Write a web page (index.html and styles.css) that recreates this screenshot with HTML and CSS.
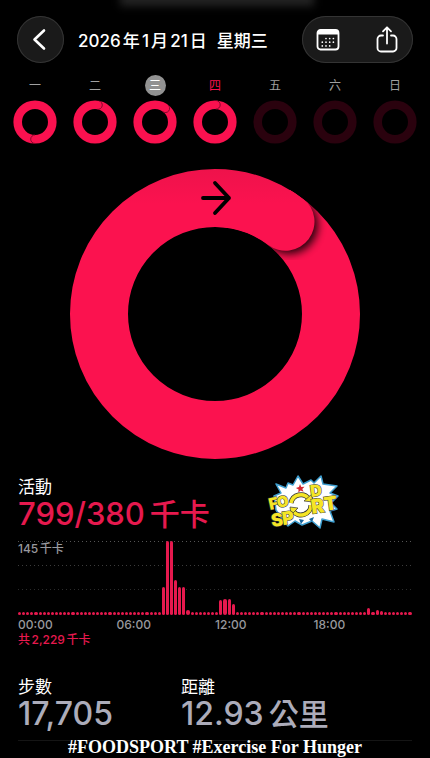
FILE: index.html
```
<!DOCTYPE html>
<html lang="zh-Hant">
  <head>
    <meta charset="UTF-8" />
    <meta name="viewport" content="width=device-width, initial-scale=1.0" />
    <title>活動</title>
    <link rel="stylesheet" href="styles.css">
  </head>
  <body>
    <header class="top-bar">
      <button class="back" aria-label="返回">
        <svg width="47" height="47" viewBox="0 0 47 47">
          <path d="M27 14.500 17.500 23.500 27 32.500" fill="none" stroke="#fff" stroke-width="2.600" stroke-linecap="round" stroke-linejoin="round" />
        </svg>
      </button>
      <h1><span>2026年1月21日</span> <span>星期三</span></h1>
      <div class="actions">
        <button aria-label="行事曆">
          <svg width="24" height="24" viewBox="0 0 24 24">
            <rect x="1.500" y="2" width="21" height="19.500" rx="3" fill="none" stroke="#fff" stroke-width="1.800" />
            <path d="M1.500 6.500V5a3 3 0 0 1 3-3h15a3 3 0 0 1 3 3v1.500z" fill="#fff" />
            <g stroke="#fff" stroke-width="1.700" stroke-linecap="round" stroke-dasharray="0 3.700">
              <path d="M10 10.500h8" />
              <path d="M6.300 14.200h12" />
              <path d="M6.300 17.900h8" />
            </g>
          </svg>
        </button>
        <button aria-label="分享">
          <svg width="24" height="30" viewBox="0 0 24 30">
            <g fill="none" stroke="#fff" stroke-width="1.800" stroke-linecap="round" stroke-linejoin="round">
              <path d="M8 10.500H6a3.500 3.500 0 0 0-3.500 3.500v9A3.500 3.500 0 0 0 6 26.500h12a3.500 3.500 0 0 0 3.500-3.500v-9a3.500 3.500 0 0 0-3.500-3.500h-2" />
              <path d="M12 18.500V2.500M8 6.300l4-4 4 4" />
            </g>
          </svg>
        </button>
      </div>
    </header>

    <!-- one small ring per day, the seam shows where the lap ends -->
    <svg class="defs" width="0" height="0">
      <symbol id="ring" viewBox="0 0 44 44">
        <circle cx="22" cy="22" r="17.300" fill="none" stroke="currentColor" stroke-width="8.600" />
      </symbol>
      <symbol id="seam" viewBox="0 0 44 44">
        <path d="M22 .5a4.300 4.300 0 0 1 0 8.600" fill="none" stroke="#7d0828" stroke-width=".9" />
      </symbol>
    </svg>
    <ol class="week">
      <li><span>一</span><svg width="44" height="44"><use href="#ring" /><use href="#seam" transform="rotate(180 22 22)" /></svg></li>
      <li><span>二</span><svg width="44" height="44"><use href="#ring" /><use href="#seam" transform="rotate(10 22 22)" /></svg></li>
      <li class="selected"><span>三</span><svg width="44" height="44"><use href="#ring" /><use href="#seam" transform="rotate(37 22 22)" /></svg></li>
      <li class="today"><span>四</span><svg width="44" height="44"><use href="#ring" /><use href="#seam" transform="rotate(3 22 22)" /></svg></li>
      <li class="empty"><span>五</span><svg width="44" height="44"><use href="#ring" /></svg></li>
      <li class="empty"><span>六</span><svg width="44" height="44"><use href="#ring" /></svg></li>
      <li class="empty"><span>日</span><svg width="44" height="44"><use href="#ring" /></svg></li>
    </ol>

    <main>
      <svg class="big-ring" viewBox="0 0 290 290" role="img" aria-label="活動圓圈">
        <defs>
          <linearGradient id="shade" gradientUnits="userSpaceOnUse" x1="0" y1="0" x2="0" y2="290">
            <stop offset="0" stop-color="#ee124b" />
            <stop offset=".12" stop-color="#fb124f" />
          </linearGradient>
          <filter id="soft" x="-50%" y="-50%" width="200%" height="200%">
            <feGaussianBlur stdDeviation="4" />
          </filter>
          <mask id="band">
            <circle cx="145" cy="145" r="116" fill="none" stroke="#fff" stroke-width="58" />
          </mask>
        </defs>
        <circle cx="145" cy="145" r="116" fill="none" stroke="url(#shade)" stroke-width="58" />
        <g mask="url(#band)">
          <circle cx="219" cy="56" r="29" fill="#000" opacity=".85" filter="url(#soft)" />
          <path d="M145 29A116 116 0 0 1 215.500 52.700" fill="none" stroke="url(#shade)" stroke-width="58" stroke-linecap="round" />
        </g>
        <path d="M133 29h26M145 14l14 15-14 15" fill="none" stroke="#000" stroke-width="3.800" stroke-linecap="round" stroke-linejoin="round" />
      </svg>

      <section class="move">
        <div>
          <h2>活動</h2>
          <p class="value">799/380<span>千卡</span></p>
        </div>
        <svg class="logo" width="72" height="54" viewBox="0 0 72 54" role="img" aria-label="FOOD SPORT">
          <path d="M8 8 18 12 20 7 25 9 30 0 35 8 43 4 46 7 53 0 55 8 69 10 62 17 70 20 63 27 69 33 62 35 66 46 54 43 52 52 44 45 34 49 27 45 20 50 12 40 8 34 6 20 13 17z" fill="#fff" stroke="#3f9fd0" stroke-width="1.500" stroke-linejoin="round" />
          <path d="m32 8 1.300 3 3.200-.3-2.200 2.300 1.300 2.800-2.900-1.300-2.400 2 .3-3.100-2.700-1.500 3.100-.8z" fill="#d32731" />
          <path d="m31 43 5 1-3 4zM41 43l5-2-2 5z" fill="#17639b" />
          <g fill="none" stroke="#333" stroke-width="5">
            <path d="M23 27A10 10 0 0 1 41 23M43 29A10 10 0 0 1 25 35" />
          </g>
          <g fill="none" stroke="#f5e526" stroke-width="3.600">
            <path d="M23 27A10 10 0 0 1 41 23M43 29A10 10 0 0 1 25 35" />
          </g>
          <path d="m36 25 9 1-1-8zM30 32l-8-1 1 8z" fill="#f5e526" stroke="#333" stroke-width=".7" />
          <g class="logo-text">
            <text x="2" y="34" font-size="16" transform="rotate(-12 2 34)">F</text>
            <text x="10" y="32" font-size="15" transform="rotate(-12 10 32)">O</text>
            <text x="43" y="21" font-size="16" transform="rotate(-8 43 21)">D</text>
            <text x="4" y="51" font-size="18" transform="rotate(-8 4 51)">S</text>
            <text x="15" y="49" font-size="18" transform="rotate(-8 15 49)">P</text>
            <text x="44" y="38" font-size="20" transform="rotate(-8 44 38)">R</text>
            <text x="57" y="35" font-size="19" transform="rotate(-8 57 35)">T</text>
          </g>
        </svg>
      </section>

      <section class="chart">
        <div class="plot">
          <span class="peak">145千卡</span>
          <div class="bars" id="bars"></div>
        </div>
        <div class="hours">
          <span>00:00</span>
          <span>06:00</span>
          <span>12:00</span>
          <span>18:00</span>
        </div>
        <p class="total">共2,229千卡</p>
      </section>

      <section class="stats">
        <div>
          <h2>步數</h2>
          <p class="value">17,705</p>
        </div>
        <div>
          <h2>距離</h2>
          <p class="value">12.93<span>公里</span></p>
        </div>
      </section>
    </main>

    <footer>#FOODSPORT #Exercise For Hunger</footer>

    <script>
      // one bar for each quarter of an hour, quiet quarters stay at 3px
      const active = {
        35: 28, 36: 74, 37: 74, 38: 35, 39: 28, 40: 28, 41: 5,
        49: 15, 50: 16, 51: 16, 52: 11,
        85: 7, 87: 5, 88: 4
      };
      const bars = document.getElementById("bars");

      for (let i = 0; i < 96; i++) {
        const bar = document.createElement("i");
        bar.style.height = (active[i] || 3) + "px";
        bars.appendChild(bar);
      }
    </script>
  </body>
</html>
```
FILE: styles.css
```
* {
  margin: 0;
  padding: 0;
  box-sizing: border-box;
}
body {
  background-color: #000;
  color: #fff;
  font-family: Inter, "Noto Sans CJK TC", sans-serif;
  text-autospace: normal;
  position: relative;
}
/* faint glow at the top edge */
body::before {
  content: "";
  position: absolute;
  top: -8px;
  left: 28%;
  right: 27%;
  height: 14px;
  background-color: #242424;
  filter: blur(4px);
}
svg {
  display: block;
}
button {
  border: none;
  background: none;
  cursor: pointer;
}
.defs {
  position: absolute;
}
.top-bar {
  display: flex;
  align-items: center;
  padding: 16px 17px 0;
}
.back,
.actions {
  height: 47px;
  background-color: #1a1a1a;
  border-radius: 24px;
  box-shadow: inset 0 0 0 1px #343434;
}
.back {
  width: 47px;
}
h1 {
  flex: 1;
  display: flex;
  gap: 10px;
  padding-left: 14px;
  font-size: 17px;
  font-weight: 500;
  white-space: nowrap;
}
.actions {
  width: 111px;
  display: flex;
  justify-content: space-between;
  align-items: center;
  padding: 0 14px;
}
.week {
  display: grid;
  grid-template-columns: repeat(7, 1fr);
  list-style: none;
  padding: 12px 5px 0;
}
.week li {
  display: flex;
  flex-direction: column;
  align-items: center;
  gap: 4px;
  color: #fa114f;
}
.week span {
  width: 21px;
  height: 21px;
  border-radius: 50%;
  color: #a0a0a0;
  font-size: 12px;
  line-height: 21px;
  text-align: center;
}
.week .selected span {
  background-color: #929292;
  color: #fff;
}
.week .today span {
  color: #fa114f;
}
.week .empty {
  color: #2a020e;
}
main {
  padding: 25px 18px 0;
}
.big-ring {
  width: 74%;
  max-width: 290px;
  margin: 0 auto;
}
h2 {
  font-size: 17px;
  font-weight: 400;
  line-height: 22px;
}
.value {
  font-size: 32px;
  font-weight: 500;
  line-height: 32px;
  white-space: nowrap;
}
.value span {
  margin-left: 1px;
  font-size: 30px;
}
.move {
  display: flex;
  gap: 58px;
  padding-top: 17px;
  color: #e6194e;
}
.move h2 {
  color: #fff;
}
.move .value {
  font-size: 31px;
}
.logo {
  overflow: visible;
}
.logo-text {
  font-family: Inter, sans-serif;
  font-weight: 900;
  fill: #f5e526;
  stroke: #333;
  stroke-width: 1px;
  paint-order: stroke;
}
.chart {
  padding-top: 11px;
  color: #98989d;
  font-size: 12px;
  font-weight: 500;
}
.plot {
  height: 74px;
  position: relative;
  background-image:
    repeating-linear-gradient(90deg, #555 0 1px, transparent 1px 4px),
    repeating-linear-gradient(90deg, #3c3c3c 0 1px, transparent 1px 4px),
    repeating-linear-gradient(90deg, #2c2c2c 0 1px, transparent 1px 4px);
  background-position: 0 0, 0 24px, 0 48px;
  background-size: 100% 1px;
  background-repeat: no-repeat;
}
.peak {
  position: absolute;
  top: 0;
  left: 0;
  line-height: 16px;
}
.bars {
  height: 100%;
  display: flex;
  align-items: flex-end;
  gap: 1px;
}
.bars i {
  flex: 1;
  background-color: #e6194e;
  border-radius: 2px;
}
.hours {
  display: grid;
  grid-template-columns: repeat(4, 1fr);
  padding-top: 2px;
  line-height: 16px;
}
.total {
  color: #e6194e;
  line-height: 14px;
}
.stats {
  display: grid;
  grid-template-columns: 163px 1fr;
  margin-top: 29px;
  padding-bottom: 10px;
  border-bottom: 1px solid #151515;
}
.stats .value {
  color: #acacba;
}
footer {
  padding-bottom: 5px;
  font-family: "Liberation Serif", serif;
  font-size: 18px;
  font-weight: bold;
  line-height: 12px;
  text-align: center;
}
```
